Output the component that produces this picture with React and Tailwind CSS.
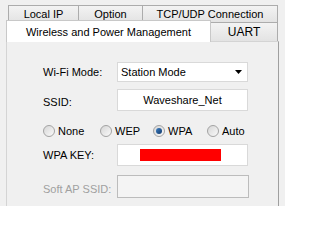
import React from "react";

const Radio = ({ label, checked, className }) => (
  <div className={`flex items-center ${className}`}>
    <span className="relative flex h-[12px] w-[12px] items-center justify-center rounded-full border border-[#a3a3a3] bg-gradient-to-br from-[#d6d6d6] to-[#fafafa]">
      {checked && (
        <span className="h-[6px] w-[6px] rounded-full bg-gradient-to-br from-[#3c7fc4] to-[#133a6b]"></span>
      )}
    </span>
    <span className="ml-[3px] text-black">{label}</span>
  </div>
);

const App = () => {
  return (
    <div className="h-[206px] w-[285px] overflow-hidden bg-[#f0f0f0] pt-[5px] font-['Liberation_Sans',Arial,sans-serif] text-[11px] text-black">
      {/* Top row of tabs */}
      <div className="flex h-[17px] pl-[8px]">
        <div className="flex w-[71px] items-center justify-center border border-b-0 border-[#acacac] bg-gradient-to-b from-[#f3f3f3] to-[#e3e3e3]">
          Local IP
        </div>
        <div className="-ml-px flex w-[65px] items-center justify-center border border-b-0 border-[#acacac] bg-gradient-to-b from-[#f3f3f3] to-[#e3e3e3]">
          Option
        </div>
        <div className="-ml-px flex w-[136px] items-center justify-center border border-b-0 border-[#acacac] bg-gradient-to-b from-[#f3f3f3] to-[#e3e3e3]">
          TCP/UDP Connection
        </div>
      </div>

      {/* Second row of tabs */}
      <div className="-mt-[2px] flex h-[21px] items-end pl-[6px]">
        <div className="relative z-10 -mb-px flex h-[22px] w-[205px] justify-center border border-b-0 border-[#c8c8c8] bg-white pt-[3px]">
          Wireless and Power Management
        </div>
        <div className="-ml-px flex h-[19px] w-[68px] items-center justify-center border border-b-0 border-[#acacac] bg-gradient-to-b from-[#f3f3f3] to-[#e3e3e3] text-[12px]">
          UART
        </div>
      </div>

      {/* Panel */}
      <div className="ml-[6px] h-[170px] w-[273px] border border-b-0 border-[#d4d4d4] border-r-[#9f9f9f] pl-[36px] pt-[20px]">
        <div className="flex h-[20px] items-center">
          <span className="w-[74px]">Wi-Fi Mode:</span>
          <div className="flex h-[20px] w-[131px] items-center justify-between border border-[#d9d9d9] bg-white pl-[3px] pr-[5px]">
            <span>Station Mode</span>
            <svg width="7" height="4" viewBox="0 0 7 4">
              <path d="M0 0H7L3.5 4Z" fill="#000" />
            </svg>
          </div>
        </div>

        <div className="mt-[7px] flex h-[22px] items-center">
          <span className="w-[74px] pt-[5px]">SSID:</span>
          <div className="flex h-[22px] w-[131px] items-center justify-center border border-[#d9d9d9] bg-white">
            Waveshare_Net
          </div>
        </div>

        <div className="mt-[14px] flex h-[12px] items-center">
          <Radio label="None" className="w-[57px]" />
          <Radio label="WEP" className="w-[53px]" />
          <Radio label="WPA" checked className="w-[54px]" />
          <Radio label="Auto" />
        </div>

        <div className="mt-[7px] flex h-[22px] items-center">
          <span className="w-[74px] pt-[1px]">WPA KEY:</span>
          <div className="flex h-[22px] w-[131px] items-center border border-[#d9d9d9] bg-white pl-[22px]">
            <div className="h-[12px] w-[81px] bg-[#ff0000]"></div>
          </div>
        </div>

        <div className="mt-[9px] flex h-[23px] items-center">
          <span className="w-[74px] pt-[5px] text-[#a0a0a0]">Soft AP SSID:</span>
          <div className="h-[23px] w-[132px] border border-[#bcbcbc] bg-[#f4f4f4]"></div>
        </div>
      </div>
    </div>
  );
};

export default App;
